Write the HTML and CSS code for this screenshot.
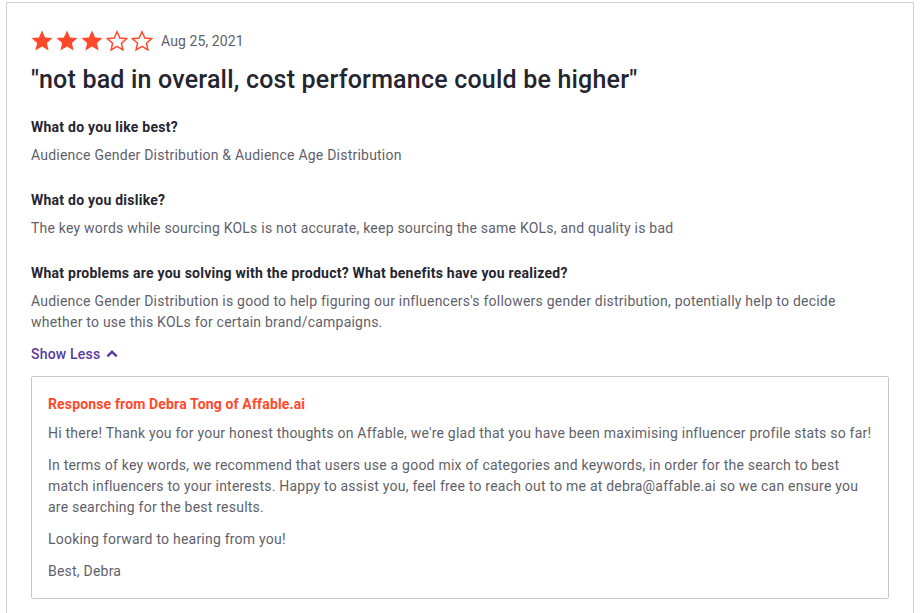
FILE: index.html
```html
<!DOCTYPE html>
<html lang="en">
<head>
  <meta charset="UTF-8">
  <title>Review</title>
  <link rel="stylesheet" href="styles.css">
</head>
<body>

  <div class="review">
    <div class="review-top">
      <div class="stars">
        <svg class="star" viewBox="1 1 22 21"><path class="full" d="M12 1.5l3.1 7 7.4.6-5.6 4.9 1.7 7.4L12 17.5l-6.6 3.9 1.7-7.4L1.5 9.1l7.4-.6z"/></svg>
        <svg class="star" viewBox="1 1 22 21"><path class="full" d="M12 1.5l3.1 7 7.4.6-5.6 4.9 1.7 7.4L12 17.5l-6.6 3.9 1.7-7.4L1.5 9.1l7.4-.6z"/></svg>
        <svg class="star" viewBox="1 1 22 21"><path class="full" d="M12 1.5l3.1 7 7.4.6-5.6 4.9 1.7 7.4L12 17.5l-6.6 3.9 1.7-7.4L1.5 9.1l7.4-.6z"/></svg>
        <svg class="star" viewBox="1 1 22 21"><path class="empty" d="M12 2.8l2.8 6.3 6.7.6-5.1 4.5 1.5 6.7L12 17.4l-5.9 3.5 1.5-6.7-5.1-4.5 6.7-.6z"/></svg>
        <svg class="star" viewBox="1 1 22 21"><path class="empty" d="M12 2.8l2.8 6.3 6.7.6-5.1 4.5 1.5 6.7L12 17.4l-5.9 3.5 1.5-6.7-5.1-4.5 6.7-.6z"/></svg>
      </div>
      <span class="date">Aug 25, 2021</span>
    </div>

    <h1>"not bad in overall, cost performance could be higher"</h1>

    <div class="qa">
      <div class="question">What do you like best?</div>
      <p class="answer">Audience Gender Distribution &amp; Audience Age Distribution</p>
    </div>

    <div class="qa">
      <div class="question">What do you dislike?</div>
      <p class="answer">The key words while sourcing KOLs is not accurate, keep sourcing the same KOLs, and quality is bad</p>
    </div>

    <div class="qa qa-last">
      <div class="question">What problems are you solving with the product? What benefits have you realized?</div>
      <p class="answer">Audience Gender Distribution is good to help figuring our influencers's followers gender distribution, potentially help to decide whether to use this KOLs for certain brand/campaigns.</p>
    </div>

    <a class="show-less" href="#">Show Less
      <svg viewBox="0 0 12 10"><path d="M6 1L11.5 6.5 9.8 8.2 6 4.4 2.2 8.2 0.5 6.5z"/></svg>
    </a>

    <div class="response">
      <div class="response-title">Response from Debra Tong of Affable.ai</div>
      <p>Hi there! Thank you for your honest thoughts on Affable, we're glad that you have been maximising influencer profile stats so far!</p>
      <p>In terms of key words, we recommend that users use a good mix of categories and keywords, in order for the search to best match influencers to your interests. Happy to assist you, feel free to reach out to me at debra@affable.ai so we can ensure you are searching for the best results.</p>
      <p>Looking forward to hearing from you!</p>
      <p>Best, Debra</p>
    </div>
  </div>

</body>
</html>
```

FILE: styles.css
```css
body {
  margin: 0;
  padding: 2px 0 0 6px;
  background: #fff;
  font-family: Roboto, "Liberation Sans", sans-serif;
  color: #252530;
}
.review {
  width: 908px;
  height: 611px;
  box-sizing: border-box;
  border: 1px solid #cfcfcf;
  border-bottom: none;
  padding: 27px 24px 0 24px;
  overflow: hidden;
}
.review-top {
  display: flex;
  align-items: center;
}
.stars {
  display: flex;
  gap: 3px;
}
.star {
  width: 22px;
  height: 21px;
}
.star .full {
  fill: #ff492c;
}
.star .empty {
  fill: none;
  stroke: #ff492c;
  stroke-width: 1.5;
}
.date {
  margin-left: 8px;
  font-size: 14px;
  color: #5f5f6b;
  letter-spacing: 0.1px;
}
h1 {
  margin: 14px 0 22px 0;
  font-size: 25px;
  font-weight: 500;
  line-height: 30px;
  letter-spacing: 0.2px;
}
.qa {
  margin-bottom: 24px;
}
.qa-last {
  margin-bottom: 11px;
}
.question {
  font-size: 14px;
  font-weight: 700;
  line-height: 20px;
  margin-bottom: 8px;
  letter-spacing: 0.25px;
}
.answer {
  margin: 0;
  font-size: 14px;
  line-height: 21px;
  color: #5f5f6b;
  letter-spacing: 0.22px;
}
.show-less {
  display: inline-flex;
  align-items: center;
  gap: 6px;
  font-size: 14px;
  font-weight: 500;
  color: #5a39a2;
  text-decoration: none;
  letter-spacing: 0.2px;
}
.show-less svg {
  width: 12px;
  height: 10px;
  fill: #5a39a2;
}
.response {
  margin-top: 13px;
  border: 1px solid #c8c8c8;
  border-radius: 2px;
  padding: 17px 16px 16px 16px;
}
.response-title {
  font-size: 14px;
  font-weight: 700;
  color: #ff492c;
  line-height: 20px;
  margin-bottom: 9px;
  letter-spacing: 0.15px;
}
.response p {
  margin: 0 0 11px 0;
  font-size: 14px;
  line-height: 21px;
  color: #5f5f6b;
  letter-spacing: 0.22px;
}
.response p:last-child {
  margin-bottom: 0;
}
```
